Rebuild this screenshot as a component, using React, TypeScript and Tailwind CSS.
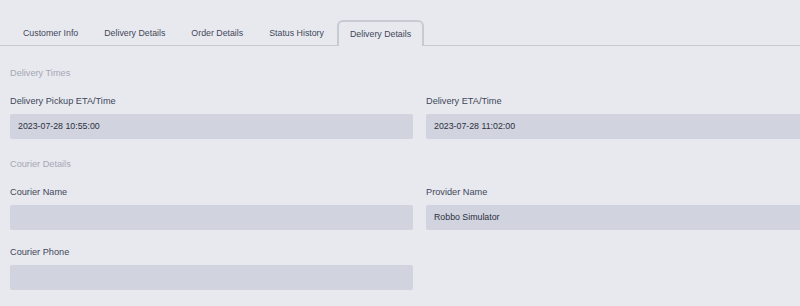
import React from 'react';

const tabs = ['Customer Info', 'Delivery Details', 'Order Details', 'Status History', 'Delivery Details'];

function Field({ label, value }: { label: string; value?: string }) {
  return (
    <div className="flex flex-col">
      <label className="text-[9.2px] leading-[12px] text-[#3f475b] mb-[7px]">{label}</label>
      <div className="h-[25px] rounded-[2px] bg-[#d1d3de] px-[8px] flex items-center text-[8.8px] text-[#2b3040]">
        {value}
      </div>
    </div>
  );
}

export default function App() {
  const active = 4;
  return (
    <div
      className="w-full h-[306px] overflow-hidden bg-[#e8e9ee]"
      style={{ fontFamily: '"Liberation Sans", Arial, sans-serif' }}
    >
      <div className="w-[839px]">
        <div className="pt-[20px] px-[10px] border-b border-[#c8cad3] flex">
          {tabs.map((t, i) =>
            i === active ? (
              <div
                key={i}
                className="h-[26px] -mb-px px-[11px] pt-[2px] flex items-center rounded-t-[6px] border-2 border-b-0 border-[#c8cad3] bg-[#e8e9ee] text-[8.8px] text-[#3f475b]"
              >
                {t}
              </div>
            ) : (
              <div key={i} className="h-[25px] px-[13px] pt-[2px] flex items-center text-[8.8px] text-[#3f475b]">
                {t}
              </div>
            )
          )}
        </div>

        <div className="px-[10px]">
          <div className="mt-[21px] text-[9.2px] leading-[12px] text-[#a4a7b4]">Delivery Times</div>
          <div className="mt-[16px] grid grid-cols-2 gap-x-[13px]">
            <Field label="Delivery Pickup ETA/Time" value="2023-07-28 10:55:00" />
            <Field label="Delivery ETA/Time" value="2023-07-28 11:02:00" />
          </div>

          <div className="mt-[19px] text-[9.2px] leading-[12px] text-[#a4a7b4]">Courier Details</div>
          <div className="mt-[16px] grid grid-cols-2 gap-x-[13px] gap-y-[16px]">
            <Field label="Courier Name" />
            <Field label="Provider Name" value="Robbo Simulator" />
            <Field label="Courier Phone" />
          </div>
        </div>
      </div>
    </div>
  );
}
